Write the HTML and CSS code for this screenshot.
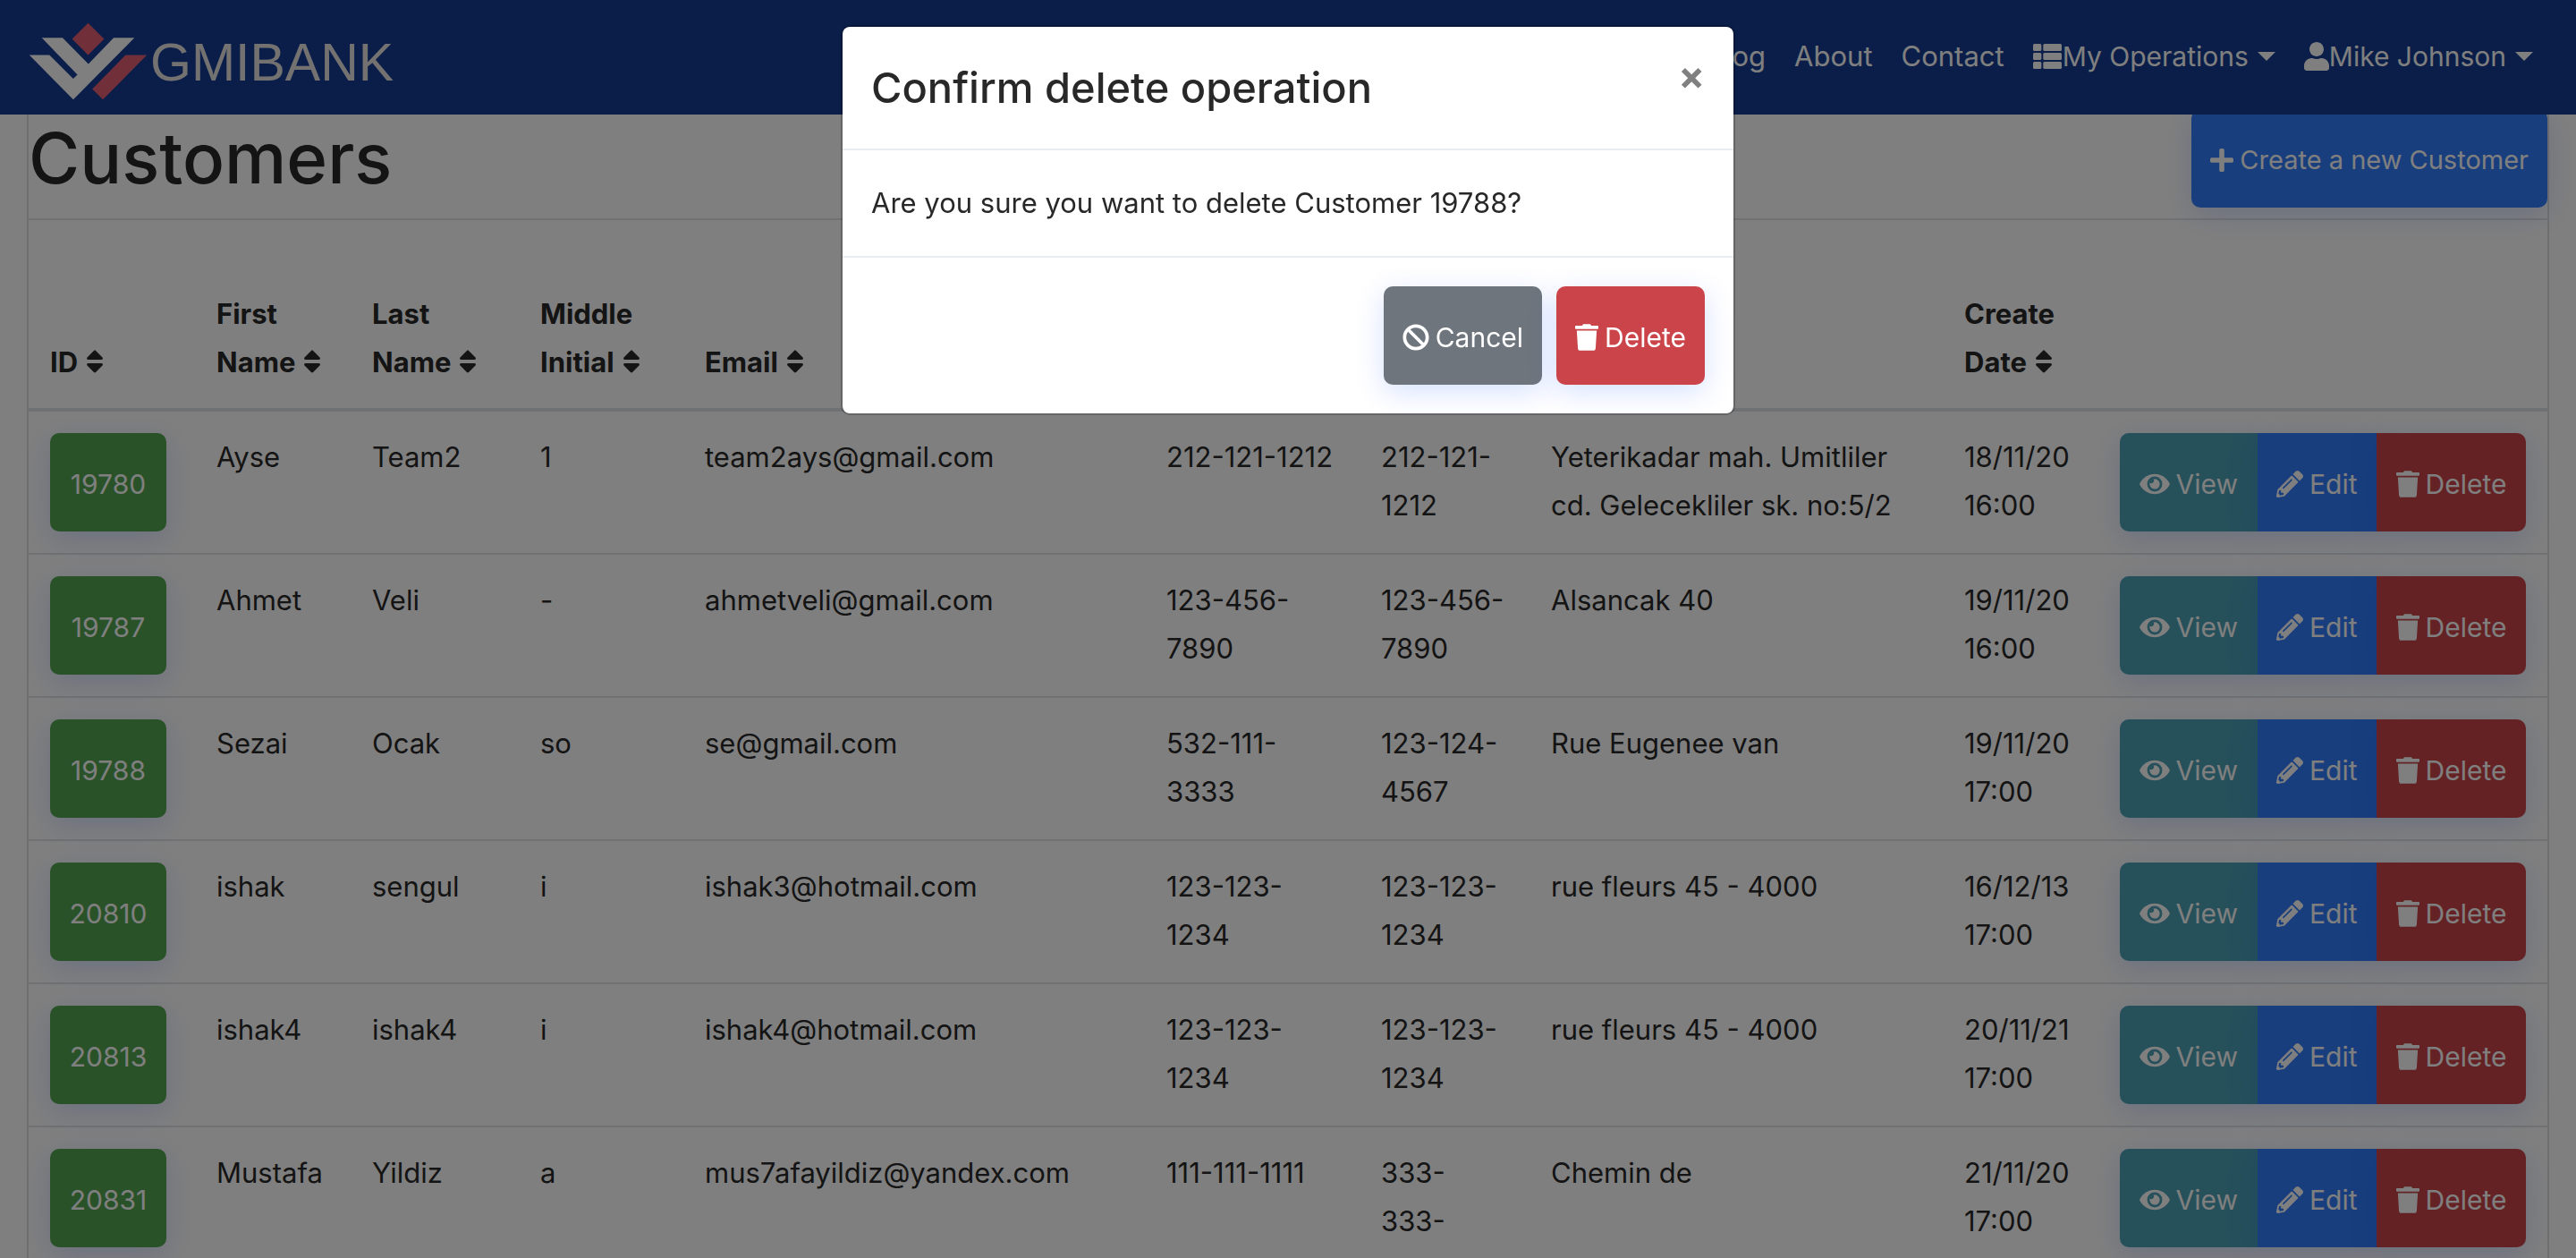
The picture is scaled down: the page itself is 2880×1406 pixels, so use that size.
FILE: index.html
```html
<!DOCTYPE html>
<html lang="en">
<head>
<meta charset="utf-8">
<meta name="viewport" content="width=device-width, initial-scale=1">
<title>Customers - GMIBANK</title>
<link rel="stylesheet" href="styles.css">
</head>
<body class="modal-open">
<svg class="sprite" aria-hidden="true">
  <symbol id="i-list" viewBox="0 0 512 512"><rect y="32" width="149" height="128" rx="24"/><rect x="181" y="32" width="331" height="128" rx="24"/><rect y="192" width="149" height="128" rx="24"/><rect x="181" y="192" width="331" height="128" rx="24"/><rect y="352" width="149" height="128" rx="24"/><rect x="181" y="352" width="331" height="128" rx="24"/></symbol>
  <symbol id="i-user" viewBox="0 0 448 512"><path d="M224 256c70.7 0 128-57.3 128-128S294.7 0 224 0 96 57.3 96 128s57.3 128 128 128zm89.6 32h-16.7c-22.2 10.2-46.9 16-72.9 16s-50.6-5.8-72.9-16h-16.7C60.2 288 0 348.2 0 422.4V464c0 26.5 21.5 48 48 48h352c26.5 0 48-21.5 48-48v-41.6c0-74.2-60.2-134.4-134.4-134.4z"/></symbol>
  <symbol id="i-plus" viewBox="0 0 448 512"><path d="M416 208H272V64c0-17.67-14.33-32-32-32h-32c-17.67 0-32 14.33-32 32v144H32c-17.67 0-32 14.33-32 32v32c0 17.67 14.33 32 32 32h144v144c0 17.67 14.33 32 32 32h32c17.67 0 32-14.33 32-32V304h144c17.67 0 32-14.33 32-32v-32c0-17.67-14.33-32-32-32z"/></symbol>
  <symbol id="i-ban" viewBox="0 0 512 512"><path d="M256 8C119.034 8 8 119.033 8 256s111.034 248 248 248 248-111.034 248-248S392.967 8 256 8zm130.108 117.892c65.448 65.448 70 165.481 20.677 235.637L150.47 105.216c70.204-49.356 170.226-44.735 235.638 20.676zM125.892 386.108c-65.448-65.448-70-165.481-20.677-235.637L361.53 406.784c-70.203 49.356-170.226 44.736-235.638-20.676z"/></symbol>
  <symbol id="i-trash" viewBox="0 0 448 512"><path d="M432 32H312l-9.4-18.7A24 24 0 0 0 281.1 0H166.8a23.72 23.72 0 0 0-21.4 13.3L136 32H16A16 16 0 0 0 0 48v32a16 16 0 0 0 16 16h416a16 16 0 0 0 16-16V48a16 16 0 0 0-16-16zM53.2 467a48 48 0 0 0 47.9 45h245.8a48 48 0 0 0 47.9-45L416 128H32z"/></symbol>
  <symbol id="i-eye" viewBox="0 0 576 512"><path d="M572.52 241.4C518.29 135.59 410.93 64 288 64S57.68 135.64 3.48 241.41a32.35 32.35 0 0 0 0 29.19C57.71 376.41 165.07 448 288 448s230.32-71.64 284.52-177.41a32.35 32.35 0 0 0 0-29.19zM288 400a144 144 0 1 1 144-144 143.93 143.93 0 0 1-144 144zm0-240a95.31 95.31 0 0 0-25.31 3.79 47.85 47.85 0 0 1-66.9 66.9A95.78 95.78 0 1 0 288 160z"/></symbol>
  <symbol id="i-pencil" viewBox="0 0 512 512"><path d="M497.9 142.1l-46.1 46.1c-4.7 4.7-12.3 4.7-17 0l-111-111c-4.7-4.7-4.7-12.3 0-17l46.1-46.1c18.7-18.7 49.1-18.7 67.9 0l60.1 60.1c18.8 18.7 18.8 49.1 0 67.9zM284.2 99.8L21.6 362.4.4 483.9c-2.9 16.4 11.4 30.6 27.8 27.8l121.5-21.3 262.6-262.6c4.7-4.7 4.7-12.3 0-17l-111-111c-4.8-4.7-12.4-4.7-17.1 0zM124.1 339.9c-5.5-5.5-5.5-14.3 0-19.8l154-154c5.5-5.5 14.3-5.5 19.8 0s5.5 14.3 0 19.8l-154 154c-5.5 5.5-14.3 5.5-19.8 0zM88 424h48v36.3l-64.5 11.3-31.1-31.1L51.7 376H88v48z"/></symbol>
  <symbol id="i-sort" viewBox="0 0 320 512"><path d="M41 288h238c21.4 0 32.1 25.9 17 41L177 448c-9.4 9.4-24.6 9.4-33.9 0L24 329c-15.1-15.1-4.4-41 17-41zm255-105L177 64c-9.4-9.4-24.6-9.4-33.9 0L24 183c-15.1 15.1-4.4 41 17 41h238c21.4 0 32.1-25.9 17-41z"/></symbol>
</svg>

<header class="navbar">
  <a class="brand" href="#">
    <svg class="brand-mark" viewBox="36 44 400 262" aria-hidden="true">
      <path class="mark-light" d="M80 96H150L237 184 322 96H392L186 304 38 154H106L186 234 200 220Z"/>
      <path class="mark-red" d="M236 46L290 100 236 154 182 100ZM362 154H434L286 304 250 268Z"/>
    </svg>
    <span class="brand-name">GMIBANK</span>
  </a>
  <nav class="nav">
    <a href="#">Blog</a>
    <a href="#">About</a>
    <a href="#">Contact</a>
    <button type="button" class="menu"><svg class="icon-list"><use href="#i-list"/></svg>My Operations<span class="caret"></span></button>
    <button type="button" class="menu"><svg class="icon-user"><use href="#i-user"/></svg>Mike Johnson<span class="caret"></span></button>
  </nav>
</header>

<main class="page">
  <div class="card">
    <div class="heading">
      <h1>Customers</h1>
      <a class="btn primary create" href="#"><svg class="icon narrow"><use href="#i-plus"/></svg>Create a new Customer</a>
    </div>
    <table class="customers">
      <colgroup><col class="c-id"><col class="c-first"><col class="c-last"><col class="c-middle"><col class="c-email"><col class="c-mobile"><col class="c-phone"><col class="c-address"><col class="c-date"><col class="c-actions"></colgroup>
      <thead>
        <tr>
          <th>ID<svg class="sort"><use href="#i-sort"/></svg></th>
          <th>First<br>Name<svg class="sort"><use href="#i-sort"/></svg></th>
          <th>Last<br>Name<svg class="sort"><use href="#i-sort"/></svg></th>
          <th>Middle<br>Initial<svg class="sort"><use href="#i-sort"/></svg></th>
          <th>Email<svg class="sort"><use href="#i-sort"/></svg></th>
          <th></th>
          <th></th>
          <th></th>
          <th>Create<br>Date<svg class="sort"><use href="#i-sort"/></svg></th>
          <th></th>
        </tr>
      </thead>
      <tbody>
        <tr>
          <td><a class="btn success" href="#">19780</a></td><td>Ayse</td><td>Team2</td><td>1</td><td>team2ays@gmail.com</td><td>212-121-1212</td><td>212-121-1212</td><td>Yeterikadar mah. Umitliler cd. Gelecekliler sk. no:5/2</td><td>18/11/20 16:00</td>
          <td><div class="group"><a class="btn info" href="#"><svg class="icon wide"><use href="#i-eye"/></svg>View</a><a class="btn primary" href="#"><svg class="icon"><use href="#i-pencil"/></svg>Edit</a><a class="btn danger" href="#"><svg class="icon narrow"><use href="#i-trash"/></svg>Delete</a></div></td>
        </tr>
        <tr>
          <td><a class="btn success" href="#">19787</a></td><td>Ahmet</td><td>Veli</td><td>-</td><td>ahmetveli@gmail.com</td><td>123-456-7890</td><td>123-456-7890</td><td>Alsancak 40</td><td>19/11/20 16:00</td>
          <td><div class="group"><a class="btn info" href="#"><svg class="icon wide"><use href="#i-eye"/></svg>View</a><a class="btn primary" href="#"><svg class="icon"><use href="#i-pencil"/></svg>Edit</a><a class="btn danger" href="#"><svg class="icon narrow"><use href="#i-trash"/></svg>Delete</a></div></td>
        </tr>
        <tr>
          <td><a class="btn success" href="#">19788</a></td><td>Sezai</td><td>Ocak</td><td>so</td><td>se@gmail.com</td><td>532-111-<br>3333</td><td>123-124-4567</td><td>Rue Eugenee van</td><td>19/11/20 17:00</td>
          <td><div class="group"><a class="btn info" href="#"><svg class="icon wide"><use href="#i-eye"/></svg>View</a><a class="btn primary" href="#"><svg class="icon"><use href="#i-pencil"/></svg>Edit</a><a class="btn danger" href="#"><svg class="icon narrow"><use href="#i-trash"/></svg>Delete</a></div></td>
        </tr>
        <tr>
          <td><a class="btn success" href="#">20810</a></td><td>ishak</td><td>sengul</td><td>i</td><td>ishak3@hotmail.com</td><td>123-123-<br>1234</td><td>123-123-1234</td><td>rue fleurs 45 - 4000</td><td>16/12/13 17:00</td>
          <td><div class="group"><a class="btn info" href="#"><svg class="icon wide"><use href="#i-eye"/></svg>View</a><a class="btn primary" href="#"><svg class="icon"><use href="#i-pencil"/></svg>Edit</a><a class="btn danger" href="#"><svg class="icon narrow"><use href="#i-trash"/></svg>Delete</a></div></td>
        </tr>
        <tr>
          <td><a class="btn success" href="#">20813</a></td><td>ishak4</td><td>ishak4</td><td>i</td><td>ishak4@hotmail.com</td><td>123-123-<br>1234</td><td>123-123-1234</td><td>rue fleurs 45 - 4000</td><td>20/11/21 17:00</td>
          <td><div class="group"><a class="btn info" href="#"><svg class="icon wide"><use href="#i-eye"/></svg>View</a><a class="btn primary" href="#"><svg class="icon"><use href="#i-pencil"/></svg>Edit</a><a class="btn danger" href="#"><svg class="icon narrow"><use href="#i-trash"/></svg>Delete</a></div></td>
        </tr>
        <tr>
          <td><a class="btn success" href="#">20831</a></td><td>Mustafa</td><td>Yildiz</td><td>a</td><td>mus7afayildiz@yandex.com</td><td>111-111-1111</td><td>333-<br>333-</td><td>Chemin de</td><td>21/11/20 17:00</td>
          <td><div class="group"><a class="btn info" href="#"><svg class="icon wide"><use href="#i-eye"/></svg>View</a><a class="btn primary" href="#"><svg class="icon"><use href="#i-pencil"/></svg>Edit</a><a class="btn danger" href="#"><svg class="icon narrow"><use href="#i-trash"/></svg>Delete</a></div></td>
        </tr>
      </tbody>
    </table>
  </div>
</main>

<div class="backdrop">
  <div class="modal" role="dialog" aria-modal="true" aria-labelledby="modal-title">
    <div class="modal-header">
      <h2 id="modal-title">Confirm delete operation</h2>
      <button type="button" class="close" aria-label="Close">×</button>
    </div>
    <div class="modal-body">Are you sure you want to delete Customer 19788?</div>
    <div class="modal-footer">
      <button type="button" class="btn secondary"><svg class="icon"><use href="#i-ban"/></svg>Cancel</button>
      <button type="button" class="btn danger"><svg class="icon narrow"><use href="#i-trash"/></svg>Delete</button>
    </div>
  </div>
</div>
</body>
</html>
```
FILE: styles.css
```css
* { box-sizing: border-box; }

body {
  margin: 0;
  background: #fff;
  color: #282828;
  font: 400 31px/54px Inter, "Liberation Sans", sans-serif;
}
.modal-open { height: 100vh; overflow: hidden; }
.sprite { display: none; }
svg { fill: currentColor; }
a { color: inherit; text-decoration: none; }
button { font: inherit; color: inherit; cursor: pointer; }

/* Navigation bar */
.navbar {
  position: fixed;
  inset: 0 0 auto;
  z-index: 10;
  display: flex;
  align-items: center;
  justify-content: space-between;
  height: 128px;
  padding: 0 32px;
  background: #143c92;
  color: #fff;
}
.brand { display: flex; align-items: center; gap: 3px; padding-top: 8px; }
.brand-mark { width: 133px; height: 87px; }
.mark-light { fill: #fefefe; }
.mark-red { fill: #e25e72; }
.brand-name {
  padding-top: 4px;
  color: #e8e5e3;
  font: 59px/64px "Liberation Sans", Arial, sans-serif;
}
.nav { display: flex; align-items: center; padding-bottom: 3px; }
.nav a, .menu { padding: 0 16px; }
.menu { display: flex; align-items: center; border: 0; background: none; font-size: 30px; }
.icon-list { width: 32px; height: 32px; margin-right: 1px; }
.icon-user { width: 28px; height: 32px; }
.caret {
  margin-left: 10px;
  border: solid transparent;
  border-width: 10px 10px 0;
  border-top-color: currentColor;
}

/* Customer list */
.page { padding: 0 30px; }
.card { border: solid #dfdfdf; border-width: 0 2px; }
.heading {
  display: flex;
  align-items: center;
  justify-content: space-between;
  padding: 122px 0 12px;
}
h1 { margin: 0; font-size: 78px; font-weight: 500; line-height: 96px; }

.customers { width: 100%; table-layout: fixed; border-collapse: separate; border-spacing: 0; }
.customers th, .customers td {
  padding: 24px;
  border-top: 2px solid #dee2e6;
  text-align: left;
  vertical-align: top;
}
.customers th {
  height: 214px;
  border-bottom: 2px solid #dee2e6;
  font-weight: 700;
  vertical-align: bottom;
  white-space: nowrap;
}
.c-id { width: 186px; }
.c-first { width: 174px; }
.c-last { width: 188px; }
.c-middle { width: 184px; }
.c-email { width: 516px; }
.c-mobile { width: 240px; }
.c-phone { width: 190px; }
.c-address { width: 462px; }
.c-date { width: 174px; }
.c-actions { width: 502px; }
.sort { width: 20px; height: 32px; margin-left: 9px; vertical-align: -4px; }

/* Buttons */
.btn {
  display: inline-flex;
  align-items: center;
  justify-content: center;
  gap: 7px;
  min-width: 130px;
  height: 110px;
  padding: 3px 21px 0;
  border: 0;
  border-radius: 10px;
  color: #fff;
  font-size: 30px;
  white-space: nowrap;
  vertical-align: top;
  box-shadow: 0 8px 32px rgba(0, 80, 255, 0.17);
}
.create { font-size: 29px; }
.icon { flex: none; width: 30px; height: 30px; }
.icon.narrow { width: 26px; }
.icon.wide { width: 34px; }
.primary { background: #327cfa; }
.success { background: #52a552; }
.info { background: #4ca0b5; }
.danger { background: #cb444a; }
.secondary { background: #6e757d; }
.group { display: flex; }
.group .btn { flex: 1 1 auto; border-radius: 0; }
.group .btn:first-child { border-radius: 10px 0 0 10px; }
.group .btn:last-child { border-radius: 0 10px 10px 0; }

/* Confirmation dialog */
.backdrop {
  position: fixed;
  inset: 0;
  z-index: 20;
  display: flex;
  align-items: flex-start;
  justify-content: center;
  padding: 28px;
  background: rgba(0, 0, 0, 0.5);
}
.modal {
  width: 1000px;
  max-width: 100%;
  border: 2px solid rgba(0, 0, 0, 0.2);
  border-radius: 10px;
  background: #fff;
  background-clip: padding-box;
}
.modal-header {
  display: flex;
  align-items: flex-start;
  justify-content: space-between;
  padding: 32px;
  border-bottom: 2px solid #e9ecf3;
}
.modal-header h2 { margin: 0; font-size: 47px; font-weight: 500; line-height: 72px; }
.close {
  padding: 0;
  border: 0;
  background: none;
  color: #808080;
  font-size: 44px;
  font-weight: 700;
  line-height: 44px;
}
.modal-body { padding: 32px; }
.modal-footer {
  display: flex;
  justify-content: flex-end;
  gap: 16px;
  padding: 32px;
  border-top: 2px solid #e9ecf3;
}
```
